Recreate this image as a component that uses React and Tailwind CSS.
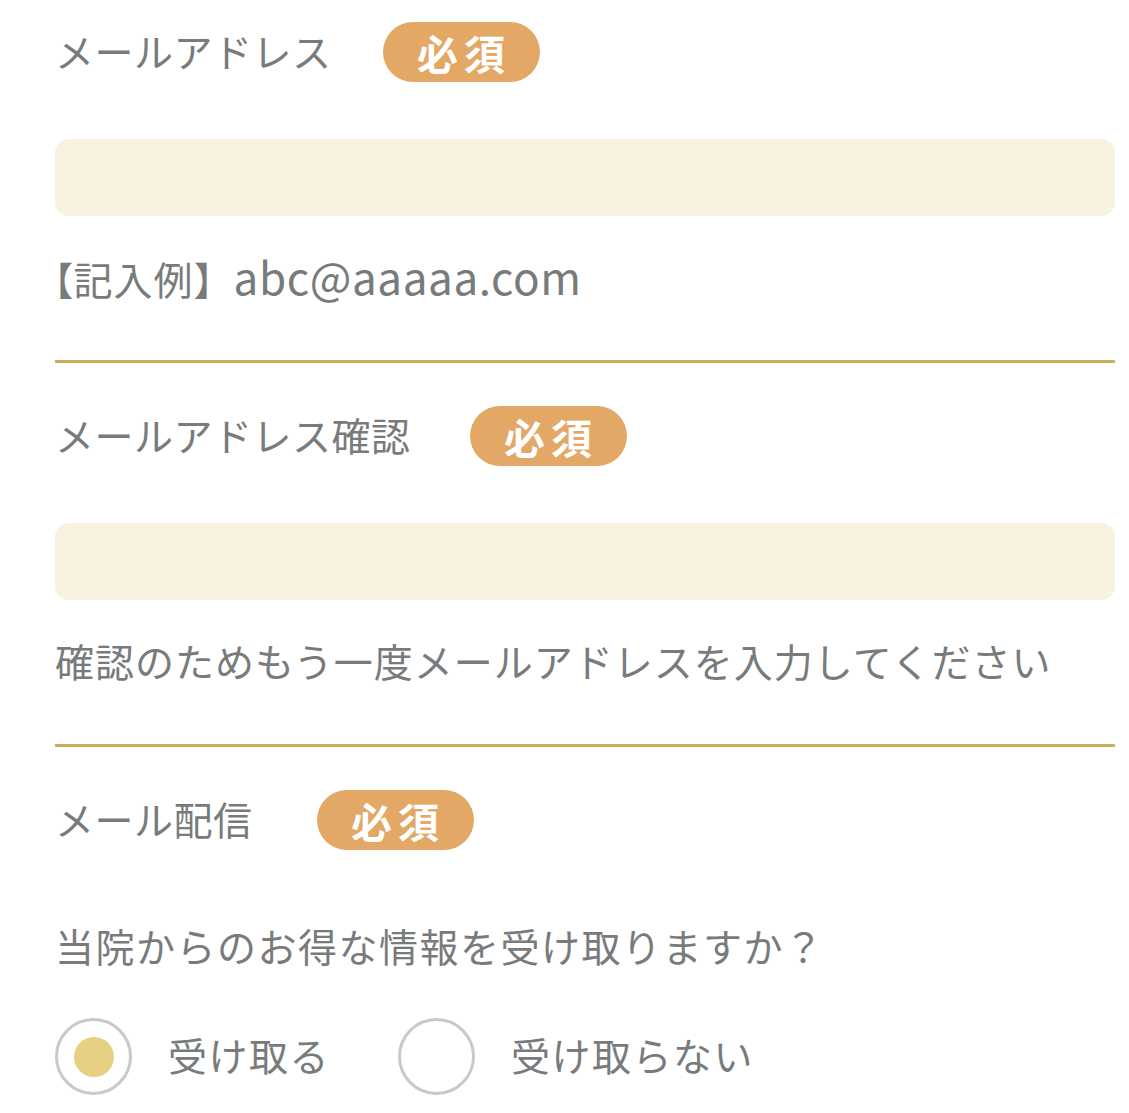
import React, { useState } from 'react';

const font = { fontFamily: '"Noto Sans CJK JP", "Noto Sans", sans-serif' };

const Required = () => (
    <span className="inline-flex items-center justify-center w-[157px] h-[60px] rounded-full bg-[#e3a866] text-white text-[41px] font-bold tracking-[6px] pl-[6px] leading-none">
        必須
    </span>
);

const FieldLabel = ({ label, gap }) => (
    <div className={`flex items-center h-[60px] ${gap}`}>
        <span className="text-[39px] tracking-[0.5px] text-[#787b7b] leading-none pb-[4px]">{label}</span>
        <Required />
    </div>
);

const Field = ({ label, help, first, gap }) => (
    <div className={first ? 'pt-[22px]' : 'pt-[43px]'}>
        <FieldLabel label={label} gap={gap} />
        <input
            type="text"
            className="mt-[57px] block w-full h-[77px] rounded-[14px] bg-[#f8f2e1] outline-none px-5 text-[36px] text-[#555]"
        />
        <p className="mt-[36px] h-[48px] leading-[48px] text-[39px] tracking-[1px] text-[#787b7b] whitespace-nowrap">
            {help}
        </p>
        <div className="mt-[60px] h-[3px] bg-[#cbb055]" />
    </div>
);

const Radio = ({ checked, label, onClick }) => (
    <button type="button" onClick={onClick} className="flex items-center gap-[36px]">
        <span className="flex items-center justify-center w-[77px] h-[77px] rounded-full border-[3px] border-[#c9c9c9] bg-white">
            {checked && <span className="w-[40px] h-[40px] rounded-full bg-[#e5d181]" />}
        </span>
        <span className="text-[39px] tracking-[1.5px] text-[#787b7b] leading-none pb-[4px]">{label}</span>
    </button>
);

export default function App() {
    const [receive, setReceive] = useState(true);

    return (
        <div className="bg-white min-h-screen pl-[55px] pr-[14px]" style={font}>
            <Field
                first
                gap="gap-[51px]"
                label="メールアドレス"
                help={
                    <>
                        <span className="[font-feature-settings:'palt'] tracking-[1px] -ml-[2px]">【記入例</span>
                        <span className="tracking-[1px]">】</span>
                        <span className="text-[44px] tracking-[0.6px]">abc@aaaaa.com</span>
                    </>
                }
            />
            <Field
                gap="gap-[59px]"
                label="メールアドレス確認"
                help="確認のためもう一度メールアドレスを入力してください"
            />

            <div className="pt-[43px]">
                <FieldLabel label="メール配信" gap="gap-[64px]" />
                <p className="mt-[71px] h-[48px] leading-[48px] text-[39px] tracking-[1.5px] text-[#787b7b] whitespace-nowrap">
                    当院からのお得な情報を受け取りますか？
                </p>
                <div className="mt-[49px] flex items-center gap-[68px]">
                    <Radio checked={receive} label="受け取る" onClick={() => setReceive(true)} />
                    <Radio checked={!receive} label="受け取らない" onClick={() => setReceive(false)} />
                </div>
            </div>
        </div>
    );
}
